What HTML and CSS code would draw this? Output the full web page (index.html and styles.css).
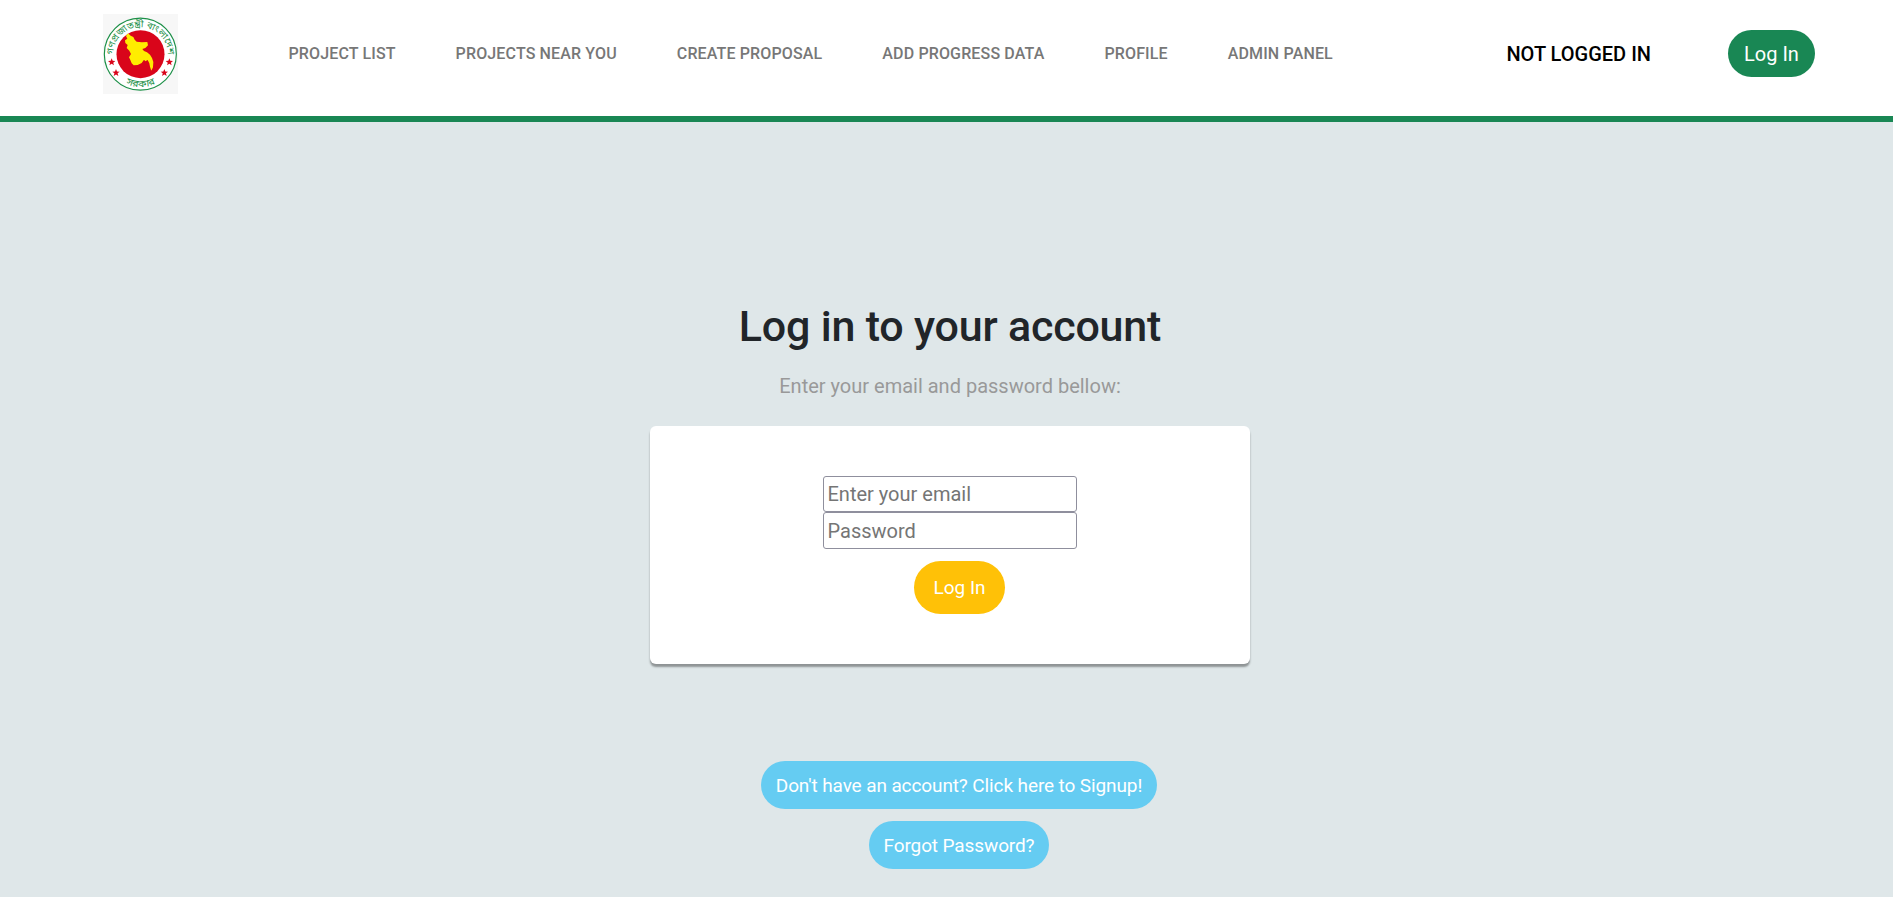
FILE: index.html
```html
<!DOCTYPE html>
<html lang="en">
<head>
<meta charset="utf-8">
<title>Log in</title>
<link rel="stylesheet" href="styles.css">
</head>
<body>
<header class="header">
  <svg class="logo" viewBox="25 27 225 240" role="img" aria-label="Government seal">
    <rect x="25" y="27" width="225" height="240" fill="#f7f7f7"/>
    <circle cx="137" cy="147.500" r="108" fill="#fff" stroke="#1d9048" stroke-width="3.500"/>
    <circle cx="137.500" cy="147.500" r="72" fill="#d9051a"/>
    <path d="M37 18L45 25L53 29L57 37L63 43L78 45L95 44L97 54L89 62L80 65L85 71L94 75L103 82L109 92L113 104L112 120L107 130L103 118L101 108L96 98L89 102L85 97L78 107L66 113L54 114L48 108L44 98L40 90L46 80L41 70L33 62L36 53L29 47L28 39L35 34L31 26Z" fill="#ffed00" transform="translate(63 67)"/>
    <path id="top-arc" d="M58 169A82 82 0 1 1 217 169" fill="none"/>
    <path id="bottom-arc" d="M75 224A99 99 0 0 0 200 224" fill="none"/>
    <text class="seal-text"><textPath href="#top-arc" startOffset="50%" text-anchor="middle" textLength="258" lengthAdjust="spacingAndGlyphs">গণপ্রজাতন্ত্রী বাংলাদেশ</textPath></text>
    <text class="seal-text"><textPath href="#bottom-arc" startOffset="50%" text-anchor="middle" textLength="92" lengthAdjust="spacingAndGlyphs">সরকার</textPath></text>
    <g fill="#d9051a">
      <path id="star" d="M51 160l3 7.500 8 .4-6.300 5 2.300 8-7-4.600-7 4.600 2.300-8-6.300-5 8-.4z"/>
      <use href="#star" x="13" y="32"/>
      <use href="#star" x="173"/>
      <use href="#star" x="158" y="32"/>
    </g>
  </svg>
  <nav class="nav">
    <a>PROJECT LIST</a>
    <a>PROJECTS NEAR YOU</a>
    <a>CREATE PROPOSAL</a>
    <a>ADD PROGRESS DATA</a>
    <a>PROFILE</a>
    <a>ADMIN PANEL</a>
  </nav>
  <span class="status">NOT LOGGED IN</span>
  <button class="btn btn-header">Log In</button>
</header>
<main class="main">
  <h1 class="title">Log in to your account</h1>
  <p class="subtitle">Enter your email and password bellow:</p>
  <form class="card">
    <input class="field" type="email" placeholder="Enter your email">
    <input class="field field-password" type="password" placeholder="Password">
    <button class="btn btn-submit" type="button">Log In</button>
  </form>
  <div class="links">
    <button class="btn btn-link">Don't have an account? Click here to Signup!</button>
    <button class="btn btn-link">Forgot Password?</button>
  </div>
</main>
</body>
</html>
```
FILE: styles.css
```css
* { box-sizing: border-box; }
body {
  margin: 0;
  height: 897px;
  overflow: hidden;
  background: #dfe7e9;
  color: #212529;
  font-family: Roboto, sans-serif;
  font-size: 20px;
}
.header {
  display: flex;
  align-items: flex-start;
  height: 122px;
  padding: 14px 78px 0 103px;
  background: #fff;
  border-bottom: 6px solid #198754;
}
.logo { width: 75px; height: 80px; flex: none; }
.seal-text { font: 400 28px "Noto Sans Bengali", "Noto Sans", sans-serif; fill: #1d9048; }
.nav {
  display: flex;
  gap: 60px;
  margin: 30px 0 0 110.500px;
  font-size: 16px;
  font-weight: 500;
  letter-spacing: .14px;
  line-height: 19px;
  color: #777;
  white-space: nowrap;
}
.status {
  margin: 28px 77px 0 auto;
  color: #000;
  font-weight: 500;
  line-height: 24px;
  white-space: nowrap;
}
.btn {
  border: 0;
  padding: 0;
  color: #fff;
  font-family: inherit;
  font-size: 19px;
  white-space: nowrap;
}
.btn-header {
  width: 87px;
  height: 47px;
  margin-top: 16px;
  border-radius: 24px;
  background: #198754;
  font-size: 20px;
}
.main {
  display: flex;
  flex-direction: column;
  align-items: center;
  padding: 178px 0 0 7px;
}
.title {
  margin: 0;
  font-size: 43px;
  font-weight: 500;
  letter-spacing: -.2px;
  line-height: 52px;
}
.subtitle { margin: 22px 0 28px; line-height: 24px; color: #999; }
.card {
  display: flex;
  flex-direction: column;
  align-items: center;
  width: 600px;
  height: 238px;
  padding-top: 50px;
  background: #fff;
  border-radius: 6px;
  box-shadow: 0 3px 2px rgba(0, 0, 0, .36);
}
.field {
  width: 254px;
  height: 36px;
  padding: 1px 3.500px;
  border: 1px solid #8f8f9d;
  border-radius: 3px;
  background: #fff;
  font: 20px Roboto, sans-serif;
}
.field-password { height: 37px; }
.field::placeholder { color: #757575; }
.btn-submit {
  width: 91px;
  height: 53px;
  margin: 12px 0 0 19px;
  border-radius: 27px;
  background: #ffc107;
}
.links {
  display: flex;
  flex-direction: column;
  align-items: center;
  gap: 12px;
  padding: 97px 0 0 18px;
}
.btn-link {
  height: 48px;
  padding: 0 15px;
  border-radius: 24px;
  background: #65ccf2;
  letter-spacing: -.11px;
}
```
